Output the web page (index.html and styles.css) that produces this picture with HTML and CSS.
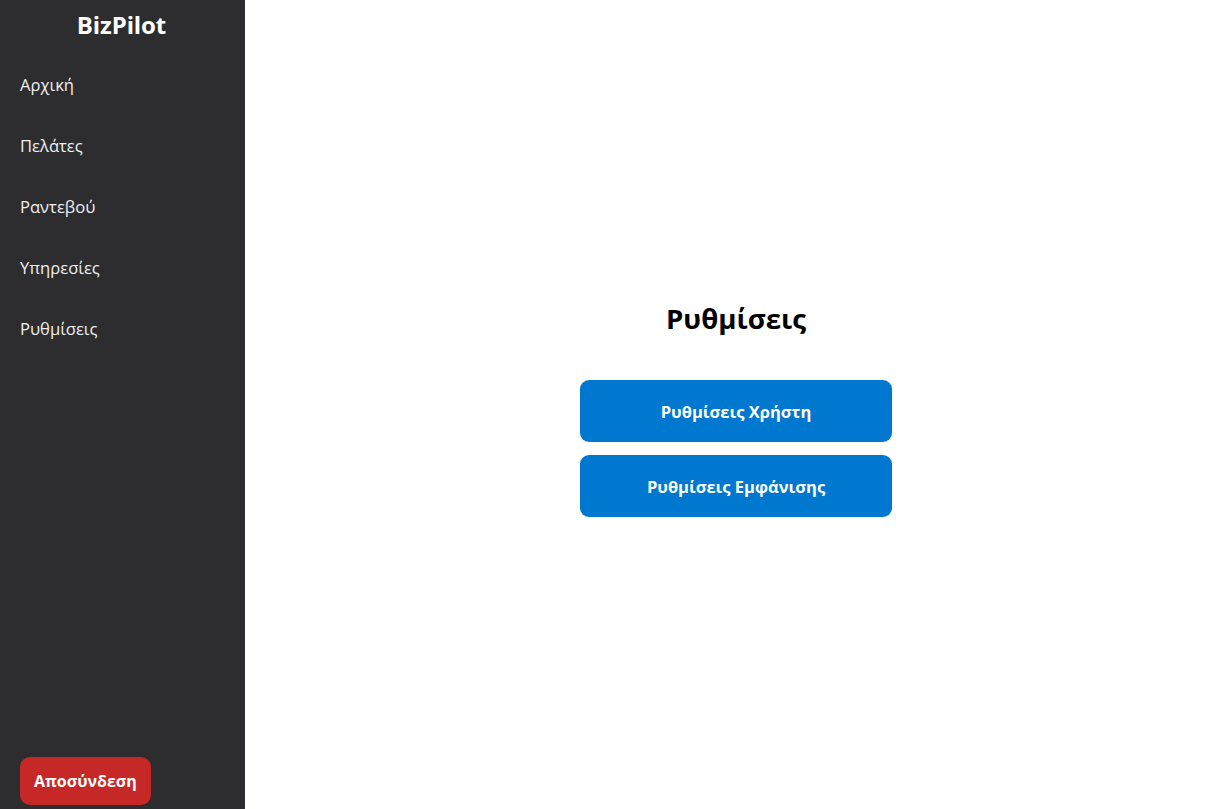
FILE: index.html
```html
<!DOCTYPE html>
<html lang="el">
<head>
<meta charset="utf-8">
<title>BizPilot</title>
<link rel="stylesheet" href="styles.css">
</head>
<body>
<div class="app">
  <aside class="sidebar">
    <div class="brand">BizPilot</div>
    <nav class="nav">
      <a class="nav-item">Αρχική</a>
      <a class="nav-item">Πελάτες</a>
      <a class="nav-item">Ραντεβού</a>
      <a class="nav-item">Υπηρεσίες</a>
      <a class="nav-item">Ρυθμίσεις</a>
    </nav>
    <button class="logout">Αποσύνδεση</button>
  </aside>
  <main class="main">
    <div class="settings">
      <h1 class="title">Ρυθμίσεις</h1>
      <button class="btn">Ρυθμίσεις Χρήστη</button>
      <button class="btn">Ρυθμίσεις Εμφάνισης</button>
    </div>
  </main>
</div>
</body>
</html>
```
FILE: styles.css
```css
* { box-sizing: border-box; }
html, body { margin: 0; padding: 0; height: 100%; }
body {
  font-family: "Open Sans", "Noto Sans", sans-serif;
  background: #ffffff;
}
.app { display: flex; height: 100vh; }
.sidebar {
  width: 245px;
  flex: 0 0 245px;
  background: #2d2d30;
  color: #ffffff;
  display: flex;
  flex-direction: column;
  padding: 0 20px 4px 20px;
}
.brand {
  font-size: 24px;
  font-weight: 700;
  text-align: center;
  line-height: 32px;
  padding-top: 9px;
  padding-right: 2px;
  letter-spacing: -0.1px;
}
.nav { display: flex; flex-direction: column; margin-top: 26px; }
.nav-item {
  font-size: 16.6px;
  line-height: 24px;
  color: #f0f0f0;
  padding: 6px 0;
  margin-bottom: 25px;
}
.logout {
  margin-top: auto;
  align-self: flex-start;
  background: #c62828;
  color: #ffffff;
  border: none;
  border-radius: 10px;
  font-family: inherit;
  font-size: 16px;
  font-weight: 700;
  height: 48px;
  padding: 0 14px;
}
.main {
  flex: 1;
  display: flex;
  align-items: center;
  justify-content: center;
  padding-left: 17px;
  padding-top: 8px;
}
.settings {
  display: flex;
  flex-direction: column;
  align-items: center;
  width: 312px;
}
.title {
  font-size: 27.6px;
  font-weight: 700;
  margin: 0 0 40px 0;
  line-height: 40px;
  color: #000;
  transform: translateY(-2px);
}
.btn {
  width: 312px;
  height: 62px;
  background: #0078d0;
  color: #fff;
  border: none;
  border-radius: 9px;
  font-family: inherit;
  font-size: 16.5px;
  font-weight: 700;
  margin-bottom: 13px;
}
.btn:last-child { margin-bottom: 0; }
```
